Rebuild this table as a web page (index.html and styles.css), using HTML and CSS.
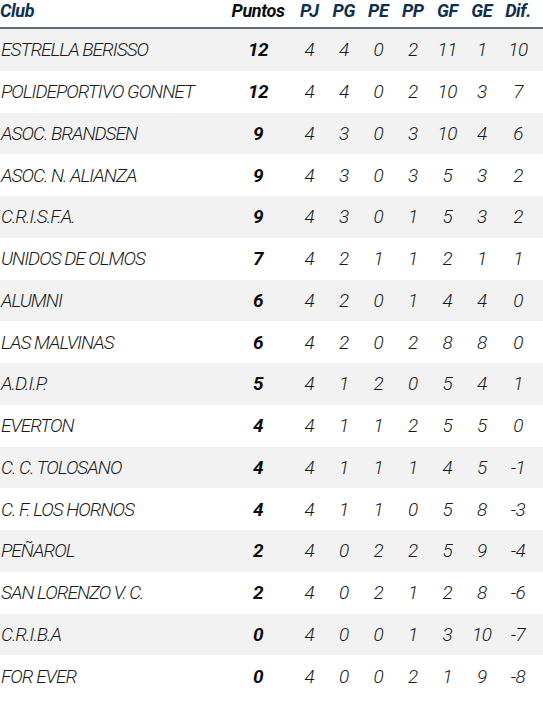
FILE: index.html
```html
<!DOCTYPE html>
<html lang="es">
<head>
<meta charset="utf-8">
<link rel="stylesheet" href="styles.css">
</head>
<body>
<div class="table">
  <div class="row head">
    <div class="club">Club</div><div class="pts">Puntos</div><div>PJ</div><div>PG</div><div>PE</div><div>PP</div><div>GF</div><div>GE</div><div>Dif.</div>
  </div>
  <div class="row"><div class="club">ESTRELLA BERISSO</div><div class="pts">12</div><div>4</div><div>4</div><div>0</div><div>2</div><div>11</div><div>1</div><div>10</div></div>
  <div class="row"><div class="club">POLIDEPORTIVO GONNET</div><div class="pts">12</div><div>4</div><div>4</div><div>0</div><div>2</div><div>10</div><div>3</div><div>7</div></div>
  <div class="row"><div class="club">ASOC. BRANDSEN</div><div class="pts">9</div><div>4</div><div>3</div><div>0</div><div>3</div><div>10</div><div>4</div><div>6</div></div>
  <div class="row"><div class="club">ASOC. N. ALIANZA</div><div class="pts">9</div><div>4</div><div>3</div><div>0</div><div>3</div><div>5</div><div>3</div><div>2</div></div>
  <div class="row"><div class="club">C.R.I.S.F.A.</div><div class="pts">9</div><div>4</div><div>3</div><div>0</div><div>1</div><div>5</div><div>3</div><div>2</div></div>
  <div class="row"><div class="club">UNIDOS DE OLMOS</div><div class="pts">7</div><div>4</div><div>2</div><div>1</div><div>1</div><div>2</div><div>1</div><div>1</div></div>
  <div class="row"><div class="club">ALUMNI</div><div class="pts">6</div><div>4</div><div>2</div><div>0</div><div>1</div><div>4</div><div>4</div><div>0</div></div>
  <div class="row"><div class="club">LAS MALVINAS</div><div class="pts">6</div><div>4</div><div>2</div><div>0</div><div>2</div><div>8</div><div>8</div><div>0</div></div>
  <div class="row"><div class="club">A.D.I.P.</div><div class="pts">5</div><div>4</div><div>1</div><div>2</div><div>0</div><div>5</div><div>4</div><div>1</div></div>
  <div class="row"><div class="club">EVERTON</div><div class="pts">4</div><div>4</div><div>1</div><div>1</div><div>2</div><div>5</div><div>5</div><div>0</div></div>
  <div class="row"><div class="club">C. C. TOLOSANO</div><div class="pts">4</div><div>4</div><div>1</div><div>1</div><div>1</div><div>4</div><div>5</div><div>-1</div></div>
  <div class="row"><div class="club">C. F. LOS HORNOS</div><div class="pts">4</div><div>4</div><div>1</div><div>1</div><div>0</div><div>5</div><div>8</div><div>-3</div></div>
  <div class="row"><div class="club">PEÑAROL</div><div class="pts">2</div><div>4</div><div>0</div><div>2</div><div>2</div><div>5</div><div>9</div><div>-4</div></div>
  <div class="row"><div class="club">SAN LORENZO V. C.</div><div class="pts">2</div><div>4</div><div>0</div><div>2</div><div>1</div><div>2</div><div>8</div><div>-6</div></div>
  <div class="row"><div class="club">C.R.I.B.A</div><div class="pts">0</div><div>4</div><div>0</div><div>0</div><div>1</div><div>3</div><div>10</div><div>-7</div></div>
  <div class="row"><div class="club">FOR EVER</div><div class="pts">0</div><div>4</div><div>0</div><div>0</div><div>2</div><div>1</div><div>9</div><div>-8</div></div>
</div>
</body>
</html>
```
FILE: styles.css
```css
html, body {
  margin: 0;
  padding: 0;
  background: #ffffff;
}
body {
  font-family: Roboto, "Liberation Sans", sans-serif;
  font-style: italic;
}
.table {
  width: 543px;
}
.row {
  display: grid;
  grid-template-columns: 230px 62px repeat(6, 34.5px) 1fr;
  align-items: center;
  height: 41.75px;
  font-size: 19px;
  font-weight: 300;
  color: #1a1a1a;
  text-align: center;
  letter-spacing: -0.5px;
}
.row:nth-child(even) {
  background: #f2f2f2;
}
.row .club {
  text-align: left;
  padding-left: 1px;
  letter-spacing: -1px;
  white-space: nowrap;
}
.row .pts {
  font-weight: 700;
  color: #0d0d0d;
  padding-right: 6px;
}
.row > div:last-child {
  padding-right: 6px;
}
.row.head {
  height: 27px;
  align-items: start;
  font-size: 18px;
  font-weight: 700;
  color: #0f3050;
  border-bottom: 2px solid #5f6a77;
  background: #fff;
  line-height: 21px;
  letter-spacing: -0.4px;
}
.row.head .club {
  letter-spacing: -0.4px;
  padding-left: 0;
}
```
